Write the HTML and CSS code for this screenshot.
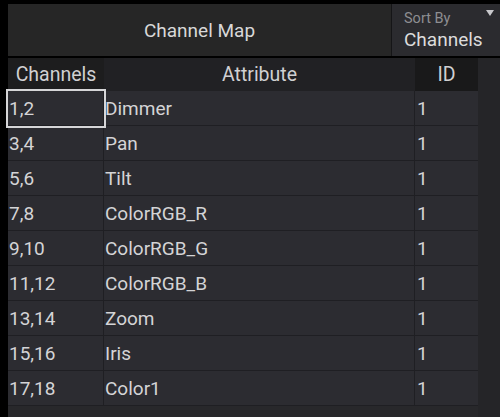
FILE: index.html
```html
<!DOCTYPE html>
<html lang="en">
<head>
    <meta charset="UTF-8">
    <title>Channel Map</title>
    <link rel="stylesheet" href="styles.css">
</head>
<body>
    <div class="panel">
        <div class="title-bar">
            <div class="title">Channel Map</div>
            <div class="sort">
                <span class="sort-label">Sort By</span>
                <span class="sort-value">Channels</span>
                <span class="sort-arrow"></span>
            </div>
        </div>
        <div class="table">
            <div class="cols">
                <div class="row head">
                    <div class="cell ch">Channels</div>
                    <div class="cell attr">Attribute</div>
                    <div class="cell id">ID</div>
                </div>
                <div class="row"><div class="cell focus">1,2</div><div class="cell">Dimmer</div><div class="cell">1</div></div>
                <div class="row"><div class="cell">3,4</div><div class="cell">Pan</div><div class="cell">1</div></div>
                <div class="row"><div class="cell">5,6</div><div class="cell">Tilt</div><div class="cell">1</div></div>
                <div class="row"><div class="cell">7,8</div><div class="cell">ColorRGB_R</div><div class="cell">1</div></div>
                <div class="row"><div class="cell">9,10</div><div class="cell">ColorRGB_G</div><div class="cell">1</div></div>
                <div class="row"><div class="cell">11,12</div><div class="cell">ColorRGB_B</div><div class="cell">1</div></div>
                <div class="row"><div class="cell">13,14</div><div class="cell">Zoom</div><div class="cell">1</div></div>
                <div class="row"><div class="cell">15,16</div><div class="cell">Iris</div><div class="cell">1</div></div>
                <div class="row"><div class="cell">17,18</div><div class="cell">Color1</div><div class="cell">1</div></div>
            </div>
            <div class="scrollbar"></div>
        </div>
    </div>
</body>
</html>
```

FILE: styles.css
```css
* {
    margin: 0;
    padding: 0;
    box-sizing: border-box;
}

body {
    background: #000;
    height: 100vh;
    overflow: hidden;
    font-family: Roboto, 'Liberation Sans', sans-serif;
    color: #d4d4d6;
}

.panel {
    height: 100vh;
    padding: 4px 0 0 8px;
    display: flex;
    flex-direction: column;
}

.title-bar {
    height: 52px;
    display: flex;
}

.title {
    flex: 1;
    background: #262626;
    display: flex;
    align-items: center;
    justify-content: center;
    font-size: 19px;
    color: #d8d8d8;
}

.sort {
    width: 109px;
    position: relative;
    background: #2b2b2f;
    border-left: 1px solid #151517;
    padding: 6px 0 0 12px;
    display: flex;
    flex-direction: column;
}

.sort-label {
    font-size: 14.5px;
    color: #8e8e92;
    line-height: 18px;
}

.sort-value {
    font-size: 19px;
    color: #dcdcdc;
    line-height: 24px;
}

.sort-arrow {
    position: absolute;
    top: 6px;
    right: 6px;
    border-left: 4px solid transparent;
    border-right: 4px solid transparent;
    border-top: 6px solid #c8c8cc;
}

.table {
    flex: 1;
    margin-top: 2px;
    display: flex;
    background: #28282b;
}

.cols {
    width: 470px;
}

.scrollbar {
    flex: 1;
    background: #252528;
}

.row {
    display: grid;
    grid-template-columns: 96px 311px 63px;
    height: 35px;
    background: #2c2c31;
}

.row .cell {
    display: flex;
    align-items: center;
    padding-left: 1px;
    font-size: 19px;
    border-right: 1px solid #1f1f23;
    border-bottom: 1px solid #1f1f23;
}

.row .cell:last-child {
    padding-left: 2px;
    border-right: none;
}

.row.head {
    height: 33px;
    background: none;
}

.row.head .cell {
    justify-content: center;
    padding: 0;
    border: none;
    font-size: 19.5px;
    color: #d0d0d2;
}

.head .ch {
    background: #1d1d1e;
}

.head .attr {
    background: #212124;
}

.head .id {
    background: #19191a;
}

.cell.focus {
    outline: 2px solid #d6d6d8;
    outline-offset: 0;
    position: relative;
}
```
